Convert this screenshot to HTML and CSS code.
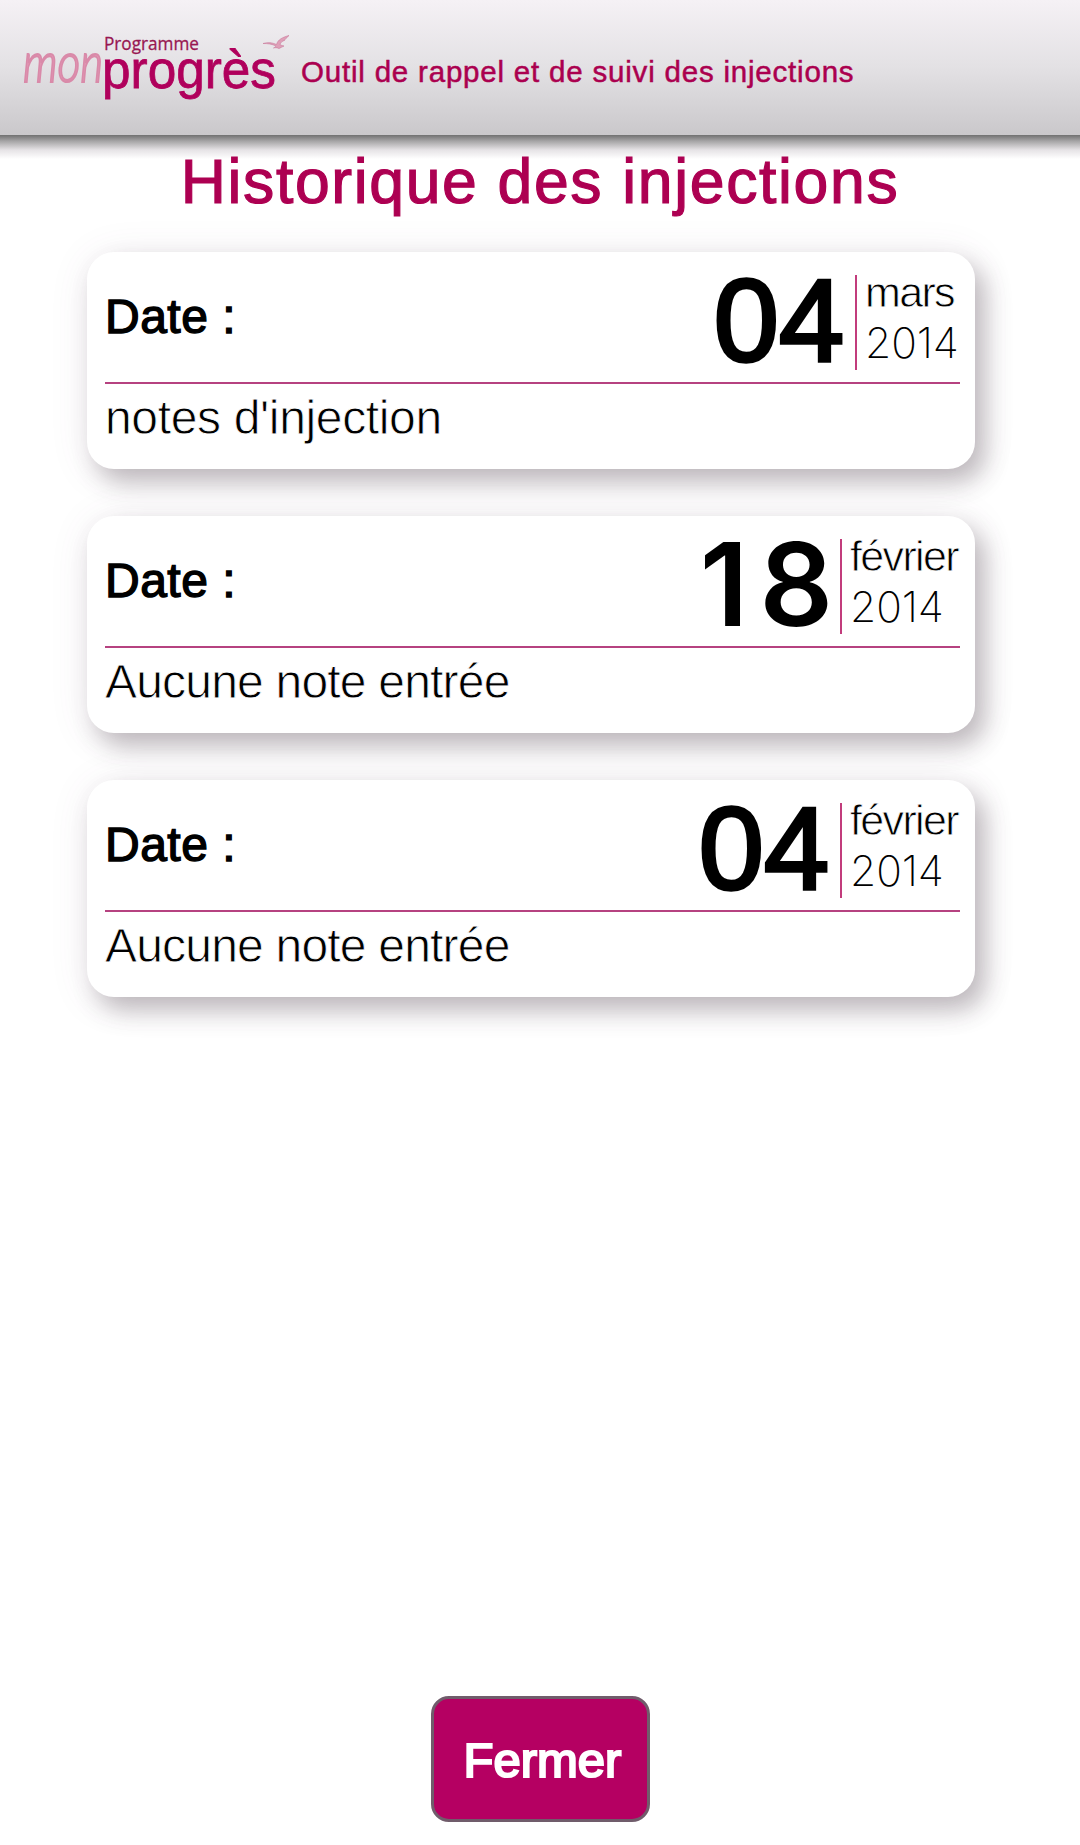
FILE: index.html
```html
<!DOCTYPE html>
<html lang="fr">
<head>
<meta charset="utf-8">
<title>Historique des injections</title>
<link rel="stylesheet" href="styles.css">
</head>
<body>
<header class="topbar">
  <svg class="logo" width="301" height="135" viewBox="0 0 301 135" role="img" aria-label="Programme mon progrès">
    <text class="logo-mon" x="23" y="82" textLength="80" lengthAdjust="spacingAndGlyphs">mon</text>
    <text class="logo-programme" x="104" y="50" textLength="95" lengthAdjust="spacingAndGlyphs">Programme</text>
    <text class="logo-progres" x="102" y="87.5" textLength="174" lengthAdjust="spacingAndGlyphs">progrès</text>
    <path class="logo-bird" d="M263 43.500C268 42 272 42.500 276.500 44.500C278 39.500 282 37.500 289 35.500C286.500 38 285 39 284.500 40.500C282.500 40.800 280.500 42.500 280 44.500C281.500 45.500 283 45.800 284 46C282 46.500 281 48 279 48.500C277 47.500 275 47.500 273.500 48C275 47.300 275.500 46.500 276 46C272 44 268 43.500 263 43.500Z"/>
  </svg>
  <p class="tagline">Outil de rappel et de suivi des injections</p>
</header>
<main class="content">
  <h1 class="title">Historique des injections</h1>
  <section class="history">
    <article class="entry">
      <div class="entry-head">
        <span class="label">Date :</span>
        <div class="date">
          <span class="day">04</span>
          <div class="period period-short"><span class="month">mars</span><span class="year">2014</span></div>
        </div>
      </div>
      <p class="note">notes d'injection</p>
    </article>
    <article class="entry">
      <div class="entry-head">
        <span class="label">Date :</span>
        <div class="date">
          <span class="day day-wide">18</span>
          <div class="period"><span class="month">février</span><span class="year">2014</span></div>
        </div>
      </div>
      <p class="note note-empty">Aucune note entrée</p>
    </article>
    <article class="entry">
      <div class="entry-head">
        <span class="label">Date :</span>
        <div class="date">
          <span class="day">04</span>
          <div class="period"><span class="month">février</span><span class="year">2014</span></div>
        </div>
      </div>
      <p class="note note-empty">Aucune note entrée</p>
    </article>
  </section>
</main>
<footer class="actions"><button class="close" type="button">Fermer</button></footer>
</body>
</html>
```
FILE: styles.css
```css
* { box-sizing: border-box; }

body {
  margin: 0;
  height: 1845px;
  display: flex;
  flex-direction: column;
  background: #fff;
  color: #000;
  font-family: "Liberation Sans", Arial, sans-serif;
}

p, h1 { margin: 0; }

.topbar {
  height: 135px;
  flex: none;
  display: flex;
  align-items: flex-start;
  background: linear-gradient(#f5f1f5, #e3e1e4 50%, #cac8cb);
}

.logo { flex: none; }
.logo-mon { font: italic 300 56px Lato, sans-serif; fill: #e496b4; stroke: #d98aa9; stroke-width: 2; }
.logo-programme { font: 18.5px "Open Sans", sans-serif; fill: #981651; stroke: #981651; stroke-width: .3; }
.logo-progres { font-size: 54px; fill: #b0005c; stroke: #b0005c; stroke-width: .8; }
.logo-bird { fill: #dfa0b8; stroke: #c9799a; stroke-width: .6; }

.tagline {
  padding-top: 54px;
  font-size: 29.5px;
  line-height: 36px;
  letter-spacing: .8px;
  color: #ab004f;
  -webkit-text-stroke: .5px #ab004f;
  white-space: nowrap;
}

.content {
  flex: 1;
  background: linear-gradient(#717171, #a5a4a5 6px, #e6e3e6 15px, #fff 24px) no-repeat;
}

.title {
  padding-top: 11px;
  font-size: 62.5px;
  font-weight: 400;
  line-height: 70px;
  letter-spacing: 1.65px;
  text-align: center;
  white-space: nowrap;
  color: #ad0052;
  -webkit-text-stroke: 1.2px #ad0052;
}

.history {
  display: flex;
  flex-direction: column;
  gap: 47px;
  padding: 36px 105px 0 87px;
}

.entry {
  height: 217px;
  padding: 0 15px 0 18px;
  border-radius: 27px;
  background: #fff;
  box-shadow: 10px 13px 25px rgba(70, 58, 67, .32), 2px 5px 42px rgba(110, 70, 105, .11);
}

.entry-head {
  height: 132px;
  display: flex;
  justify-content: space-between;
  border-bottom: 2px solid #b64280;
}

.label {
  padding-top: 37px;
  font-size: 48px;
  line-height: 56px;
  letter-spacing: .5px;
  -webkit-text-stroke: 1.4px #000;
}

.date { display: flex; padding-top: 23px; }

.day {
  height: 95px;
  padding-right: 11px;
  font-size: 117px;
  line-height: 91px;
  -webkit-text-stroke: 3.6px #000;
}

.day-wide {
  margin-right: -4px;
  padding-right: 0;
  font-family: Inter, sans-serif;
  font-weight: 600;
  font-size: 115px;
  line-height: 91px;
  letter-spacing: 11px;
  -webkit-text-stroke: 0;
}

.period {
  width: 120px;
  height: 95px;
  display: flex;
  flex-direction: column;
  padding-left: 8px;
  border-left: 2px solid #c23c7c;
  white-space: nowrap;
}

.period-short { width: 105px; }

.month {
  height: 48px;
  line-height: 35px;
  font-size: 43px;
  letter-spacing: -1.65px;
  -webkit-text-stroke: .8px #fff;
}

.year {
  font-family: Inter, sans-serif;
  font-weight: 200;
  font-size: 42.5px;
  line-height: 40px;
  letter-spacing: -.1px;
}

.note {
  padding-top: 6px;
  font-size: 48px;
  line-height: 56px;
  letter-spacing: -.35px;
  -webkit-text-stroke: .8px #fff;
}

.note-empty { letter-spacing: -.8px; }

.actions { flex: none; display: flex; justify-content: center; padding-bottom: 23px; }

.close {
  width: 219px;
  height: 126px;
  padding: 1px 0 0 5px;
  border: 3px solid #705c6b;
  border-radius: 18px;
  background: #b50062;
  color: #fff;
  font: 49px "Liberation Sans", Arial, sans-serif;
  -webkit-text-stroke: 2.2px #fff;
}
```
